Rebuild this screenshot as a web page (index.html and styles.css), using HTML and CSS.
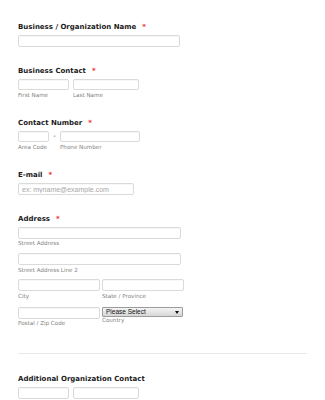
FILE: index.html
```html
<!DOCTYPE html>
<html>
<head>
<meta charset="utf-8">
<link rel="stylesheet" href="styles.css">
</head>
<body>
<form class="form">
  <div class="field f1">
    <label class="label">Business / Organization Name<span class="req">*</span></label>
    <input class="input w-org" type="text">
  </div>

  <div class="field f2">
    <label class="label">Business Contact<span class="req">*</span></label>
    <div class="row gap4">
      <div class="col">
        <input class="input short w-first" type="text">
        <span class="sub">First Name</span>
      </div>
      <div class="col">
        <input class="input short w-last" type="text">
        <span class="sub">Last Name</span>
      </div>
    </div>
  </div>

  <div class="field f3">
    <label class="label">Contact Number<span class="req">*</span></label>
    <div class="row">
      <div class="col">
        <input class="input short w-area" type="text">
        <span class="sub">Area Code</span>
      </div>
      <span class="dash">-</span>
      <div class="col">
        <input class="input short w-phone" type="text">
        <span class="sub">Phone Number</span>
      </div>
    </div>
  </div>

  <div class="field f4">
    <label class="label">E-mail<span class="req">*</span></label>
    <input class="input w-email" type="text" placeholder="ex: myname@example.com">
  </div>

  <div class="field f5">
    <label class="label">Address<span class="req">*</span></label>
    <div class="col">
      <input class="input w-addr" type="text">
      <span class="sub sub-street">Street Address</span>
    </div>
    <div class="col">
      <input class="input w-addr" type="text">
      <span class="sub sub-street2">Street Address Line 2</span>
    </div>
    <div class="row gap2">
      <div class="col">
        <input class="input w-half" type="text">
        <span class="sub sub-city">City</span>
      </div>
      <div class="col">
        <input class="input w-half" type="text">
        <span class="sub sub-city">State / Province</span>
      </div>
    </div>
    <div class="row gap2">
      <div class="col">
        <input class="input w-half" type="text">
        <span class="sub sub-postal">Postal / Zip Code</span>
      </div>
      <div class="col">
        <div class="select-wrap">
          <select class="select"><option>Please Select</option></select>
        </div>
        <span class="sub sub-country">Country</span>
      </div>
    </div>
  </div>

  <hr class="divider">

  <div class="field f6">
    <label class="label">Additional Organization Contact</label>
    <div class="row gap4">
      <input class="input w-first" type="text">
      <input class="input w-last" type="text">
    </div>
  </div>
</form>
</body>
</html>
```
FILE: styles.css
```css
* { box-sizing: border-box; }
html, body { margin: 0; padding: 0; background: #fff; }
body { width: 325px; height: 400px; overflow: hidden; }

.form {
  padding: 21px 0 0 18px;
  font-family: "DejaVu Sans", Verdana, sans-serif;
}

.field { display: flex; flex-direction: column; align-items: flex-start; }
.f1 { margin-bottom: 18px; }
.f2 { margin-bottom: 18px; }
.f3 { margin-bottom: 20px; }
.f4 { margin-bottom: 18px; }

.label {
  display: block;
  font-weight: bold;
  font-size: 7px;
  line-height: 9px;
  height: 9px;
  color: #1b1b1b;
  margin-top: 2px;
  margin-bottom: 3px;
  white-space: nowrap;
}
.f4 .label { margin-top: 0; margin-bottom: 3px; }
.f6 .label { margin-top: 0; margin-bottom: 3px; }

.req {
  color: #f2262b;
  margin-left: 6px;
  font-weight: bold;
}

.input {
  display: block;
  height: 12px;
  margin: 0;
  padding: 0 3px;
  border: 1px solid #dadada;
  border-radius: 2px;
  background: #fff;
  box-shadow: inset 0 1px 1px rgba(0,0,0,0.03);
  font-family: "Liberation Sans", Arial, sans-serif;
  font-size: 7px;
  color: #333;
  outline: none;
}
.input.short { height: 11px; }
.input::placeholder { color: #a8a8a8; }

.w-org { width: 162px; }
.w-first { width: 51px; }
.w-last { width: 66px; }
.w-area { width: 31px; }
.w-phone { width: 80px; }
.w-email { width: 116px; }
.w-addr { width: 163px; }
.w-half { width: 82px; }

.row { display: flex; align-items: flex-start; }
.gap4 { gap: 4px; }
.gap2 { gap: 2px; }
.col { display: flex; flex-direction: column; align-items: flex-start; }

.sub {
  display: block;
  font-size: 5.6px;
  line-height: 7px;
  height: 7px;
  color: #7f7f7f;
  margin-top: 2px;
  white-space: nowrap;
}
.sub-street { margin-top: 1px; margin-bottom: 6px; }
.sub-street2 { margin-top: 2px; margin-bottom: 5px; }
.sub-city { margin-top: 2px; margin-bottom: 7px; }
.sub-postal { margin-top: 1px; }
.sub-country { margin-top: 0px; }

.dash {
  width: 11px;
  text-align: center;
  font-size: 7px;
  line-height: 11px;
  color: #555;
}

.select-wrap {
  position: relative;
  width: 81px;
  height: 10px;
}
.select {
  -webkit-appearance: none;
  appearance: none;
  display: block;
  width: 81px;
  height: 10px;
  margin: 0;
  padding: 0 0 0 3px;
  border: 1px solid #9c9c9c;
  border-radius: 1px;
  background: linear-gradient(#f4f4f4, #d6d6d6);
  font-family: "Liberation Sans", Arial, sans-serif;
  font-size: 6.5px;
  line-height: 8px;
  color: #111;
  outline: none;
}
.select-wrap::after {
  content: "";
  position: absolute;
  right: 4px;
  top: 3.5px;
  border-left: 2px solid transparent;
  border-right: 2px solid transparent;
  border-top: 3px solid #111;
}

.divider {
  width: 289px;
  margin: 26px 0 21px 0;
  border: 0;
  border-top: 1px solid #e8e8e8;
  height: 0;
}
```
